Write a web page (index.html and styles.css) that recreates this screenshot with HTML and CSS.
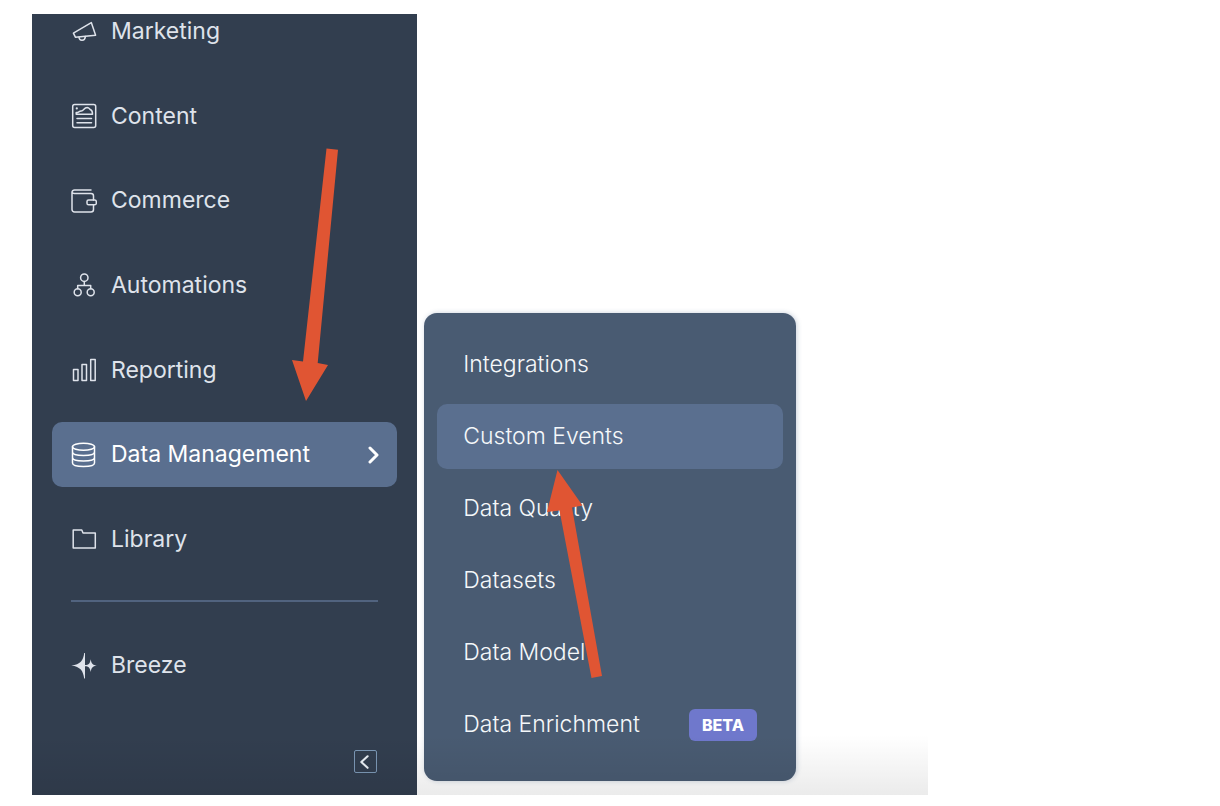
FILE: index.html
```html
<!DOCTYPE html>
<html lang="en">
	<head>
		<meta charset="utf-8">
		<title>Data Management</title>
		<meta name="viewport" content="width=device-width, initial-scale=1.0">
		<link rel="stylesheet" href="styles.css">
	</head>
	<body>
		<div class="app">
			<nav class="sidebar" aria-label="Main">
				<ul class="menu">
					<li><a class="item" href="#marketing">
						<svg class="icon" viewBox="0 0 26 26"><path d="M20.3 3.600 24.600 16.200 4.400 18.200 2.400 14.200Z"/><path d="M8 18.200c.3 4 5.800 4.200 6.400-.6"/></svg>
						Marketing
					</a></li>
					<li><a class="item" href="#content">
						<svg class="icon" viewBox="0 0 26 26"><rect x="1.700" y="1.500" width="23" height="23" rx="2"/><path d="M5.200 11.300V9.600c2.200.3 3-1.800 5-1.600 2.500.2 2.500-3.400 6-3.500 2 0 2.500 1.800 3.500 2.300 1.500.7 1.800 2.200 1.800 4.500ZM6 15.400h14.500M6 19.800h14.500"/><circle class="solid" cx="5.800" cy="5.400" r="1.100"/></svg>
						Content
					</a></li>
					<li><a class="item" href="#commerce">
						<svg class="icon" viewBox="0 0 26 26"><path d="M20 2H3.600a2.500 2.500 0 0 0-2.600 2.400V21.500a2.500 2.500 0 0 0 2.500 2.500H20a2.500 2.500 0 0 0 2.500-2.500v-4.500M22.500 12V8a2.500 2.500 0 0 0-2.500-2.500H3.500C2 5.500 1 5 1 4"/><rect x="16" y="12" width="9.300" height="4.800" rx="1.600"/></svg>
						Commerce
					</a></li>
					<li><a class="item" href="#automations">
						<svg class="icon" viewBox="0 0 26 26"><circle cx="13.300" cy="5.700" r="3.700"/><circle cx="6.700" cy="20.300" r="3.500"/><circle cx="19.700" cy="20.300" r="3.500"/><path d="M13.300 9.400v4M6.700 16.800v-3.400h13v3.400"/></svg>
						Automations
					</a></li>
					<li><a class="item" href="#reporting">
						<svg class="icon" viewBox="0 0 26 26"><path d="M2.500 12.500h4.500v11H2.500zM11 7.500h4.500v16H11zM19.700 2.500h4.500v21h-4.500z"/></svg>
						Reporting
					</a></li>
					<li><a class="item active" href="#data" aria-current="page">
						<svg class="icon" viewBox="0 0 26 26"><ellipse cx="12.500" cy="4.700" rx="11" ry="3.500"/><path d="M1.500 4.700V21c0 4.700 22 4.700 22 0V4.700M1.500 10c0 4.700 22 4.700 22 0M1.500 15.500c0 4.700 22 4.700 22 0"/></svg>
						Data Management
						<svg class="chevron" viewBox="0 0 12 18"><path d="M2 2 9 9 2 16"/></svg>
					</a></li>
					<li><a class="item" href="#library">
						<svg class="icon" viewBox="0 0 26 26"><path d="M2.200 4H10.800L12 7H24.300V22H2.200Z"/></svg>
						Library
					</a></li>
				</ul>
				<hr class="divider">
				<a class="item" href="#breeze">
					<svg class="icon" viewBox="0 0 26 26"><path class="solid" d="M14 0V12H15.500C18 11.300 19 10.200 19.700 6.200 20.400 10.400 21.500 11.800 25.800 12.600 21.500 13.400 20.400 14.800 19.700 19 19 15 18 13.900 15.500 13.200H14V25.500H13.200C12.200 18 9.500 13.800.3 12.600 9.500 11.400 12.200 7.500 13.200 0Z"/></svg>
					Breeze
				</a>
				<button class="collapse" type="button" aria-label="Collapse menu">
					<svg class="collapse-icon" viewBox="0 0 20 20"><path d="M12 5 6 10.500 12 16"/></svg>
				</button>
				<svg class="arrow arrow-down" viewBox="0 0 36 253"><path d="M34.500 0.500 46 1.700 25.700 215 36 217 14 253 0 212 11 213.500Z"/></svg>
			</nav>

			<nav class="submenu" aria-label="Data Management">
				<a class="subitem" href="#integrations">Integrations</a>
				<a class="subitem active" href="#events">Custom Events</a>
				<a class="subitem" href="#quality">Data Quality</a>
				<a class="subitem" href="#datasets">Datasets</a>
				<a class="subitem" href="#model">Data Model</a>
				<a class="subitem" href="#enrichment">Data Enrichment <span class="badge">BETA</span></a>
				<svg class="arrow arrow-up" viewBox="0 0 56 208"><path d="M10.500 0 35.500 35.500 25 37.500 55 206 44.500 208 12.500 40.500 0 42Z"/></svg>
			</nav>
		</div>
	</body>
</html>
```

FILE: styles.css
```css
* {
	box-sizing: border-box;
}
body {
	margin: 0;
	padding: 14px 32px 11px;
	font-family: Inter, "Liberation Sans", sans-serif;
	font-size: 23px;
	line-height: 29px;
	background-color: #fff;
}
.app {
	position: relative;
	display: flex;
	width: 77.5%;
	min-height: calc(100vh - 25px);
}
/* soft shade along the bottom edge */
.app::after {
	content: "";
	position: absolute;
	left: 0;
	right: 0;
	bottom: 0;
	height: 60px;
	background: linear-gradient(transparent, rgba(0, 0, 0, 0.08));
	pointer-events: none;
}

.sidebar {
	position: relative;
	display: flex;
	flex-direction: column;
	width: 43%;
	padding: 0 20px 22px;
	background-color: #323e4f;
}
.menu {
	display: flex;
	flex: 1;
	flex-direction: column;
	justify-content: space-between;
	margin: -15px 0 0;
	padding: 0;
	list-style: none;
}
.item {
	display: flex;
	align-items: center;
	gap: 14px;
	height: 65px;
	padding: 0 17px 0 19px;
	border-radius: 10px;
	color: #dfe3eb;
	text-decoration: none;
	white-space: nowrap;
}
.active {
	color: #fff;
	background-color: #5a6f8f;
}
.icon {
	flex: none;
	width: 26px;
	height: 26px;
	fill: none;
	stroke: currentColor;
	stroke-width: 1.5;
	stroke-linejoin: round;
	stroke-linecap: round;
}
.solid {
	fill: currentColor;
	stroke: none;
}
.chevron {
	width: 12px;
	height: 18px;
	margin-left: auto;
	fill: none;
	stroke: #fff;
	stroke-width: 3;
	stroke-linecap: round;
	stroke-linejoin: round;
}
.divider {
	width: calc(100% - 38px);
	margin: 28px 19px 31px;
	border: 0;
	border-top: 2px solid #51637f;
}
.collapse {
	display: flex;
	align-self: flex-end;
	width: 23px;
	height: 23px;
	margin: 52px 20px 0 0;
	padding: 0;
	border: 1px solid #7c98b6;
	border-radius: 2px;
	background: none;
}
.collapse-icon {
	width: 100%;
	height: 100%;
	fill: none;
	stroke: #eaf0f6;
	stroke-width: 2;
	stroke-linecap: round;
	stroke-linejoin: round;
}

.submenu {
	position: relative;
	display: flex;
	flex-direction: column;
	align-self: flex-end;
	gap: 7px;
	width: 41.5%;
	margin: 0 0 14px 7px;
	padding: 19px 13px 24px;
	border-radius: 13px;
	background-color: #495b72;
	box-shadow: 1px 0 5px rgba(45, 75, 120, 0.25);
}
.subitem {
	display: flex;
	align-items: center;
	justify-content: space-between;
	height: 65px;
	padding: 0 26px;
	border-radius: 10px;
	color: #f5f8fa;
	font-weight: 300;
	text-decoration: none;
	white-space: nowrap;
}
.badge {
	padding: 2px 13px;
	border-radius: 6px;
	color: #fff;
	background-color: #6f78cc;
	font-size: 16px;
	font-weight: 800;
	line-height: 28px;
}

.arrow {
	position: absolute;
	overflow: visible;
	fill: #e05533;
	pointer-events: none;
}
.arrow-down {
	left: 260px;
	top: 134px;
	width: 36px;
	height: 253px;
}
.arrow-up {
	left: 123px;
	top: 157px;
	width: 56px;
	height: 208px;
}
```
